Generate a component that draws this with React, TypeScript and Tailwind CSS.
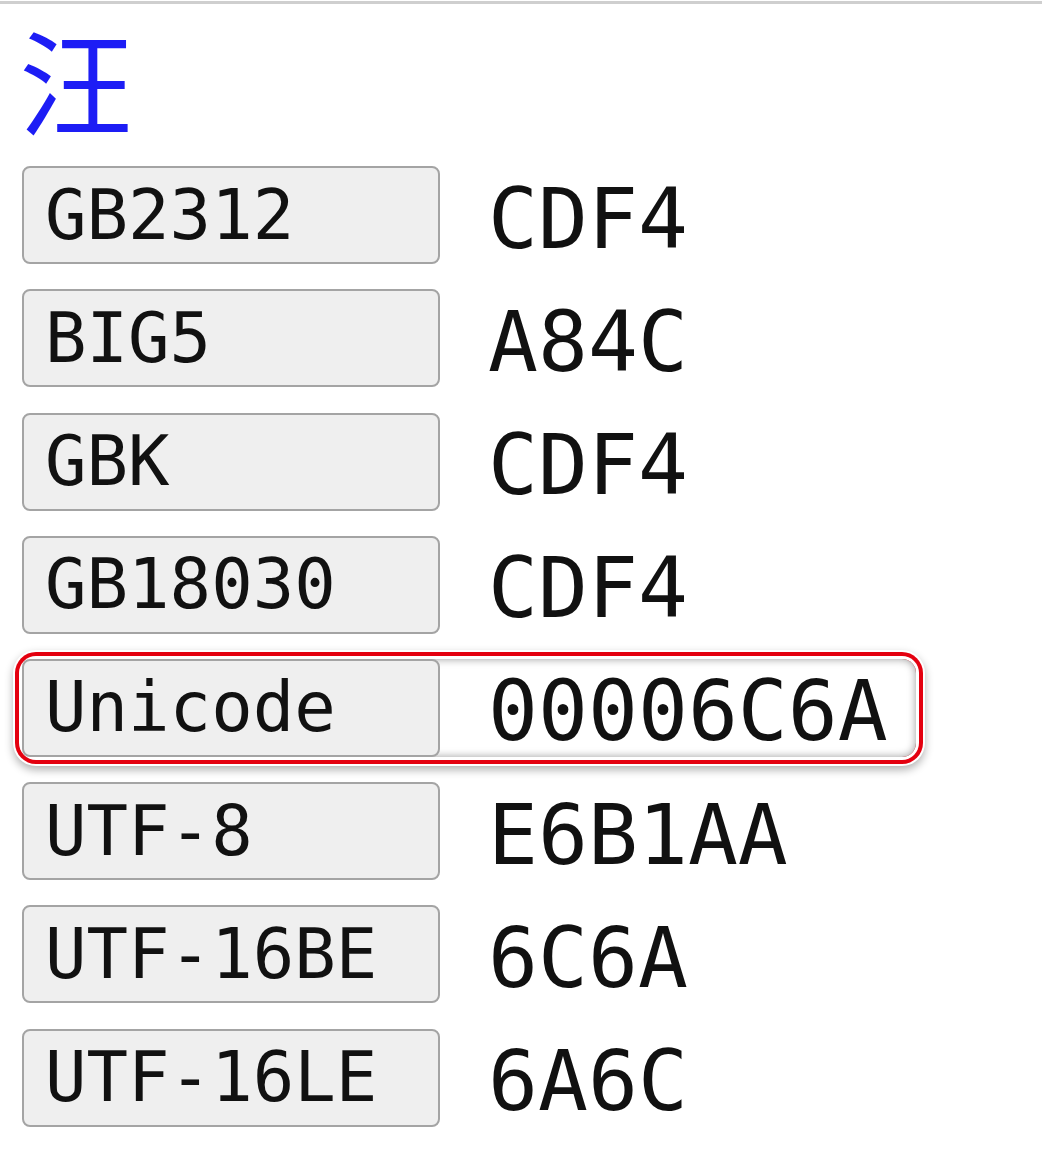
const rows = [
  { name: 'GB2312', code: 'CDF4' },
  { name: 'BIG5', code: 'A84C' },
  { name: 'GBK', code: 'CDF4' },
  { name: 'GB18030', code: 'CDF4' },
  { name: 'Unicode', code: '00006C6A', active: true },
  { name: 'UTF-8', code: 'E6B1AA' },
  { name: 'UTF-16BE', code: '6C6A' },
  { name: 'UTF-16LE', code: '6A6C' },
];

const mono = { fontFamily: '"DejaVu Sans Mono", "Liberation Mono", monospace' };

export default function App() {
  return (
    <div className="min-h-[1151px] bg-white">
      <div className="mt-[1px] border-t-[3px] border-[#cfcfcf]" />
      <div className="pl-[19px]">
        <span
          className="inline-block text-[114px] leading-[1.3] text-[#1d1df5]"
          style={{ fontFamily: '"Noto Sans CJK SC", "Noto Sans CJK JP", sans-serif' }}
        >
          汪
        </span>
      </div>

      <div className="px-[22px]">
        <div className="mt-[14px] flex flex-col gap-[25.2px]" style={mono}>
          {rows.map((r) => (
            <div
              key={r.name}
              className={`flex w-fit items-center h-[98px] rounded-[14px] ${
                r.active
                  ? 'pr-[28px] shadow-[inset_0_0_9px_rgba(0,0,0,0.4),0_0_0_3px_#ffffff,0_0_0_7px_#e4000f,0_0_0_9px_#ffffff,0_4px_8px_9px_rgba(0,0,0,0.3)]'
                  : ''
              }`}
            >
              <div className="flex h-full w-[418px] items-center rounded-[8px] border-2 border-[#a4a4a4] bg-[#efefef] pl-[21px] text-[69px] leading-none text-[#111111]">
                {r.name}
              </div>
              <div className="ml-[48px] pt-[8px] text-[83px] leading-none text-[#111111]">{r.code}</div>
            </div>
          ))}
        </div>
      </div>
    </div>
  );
}
